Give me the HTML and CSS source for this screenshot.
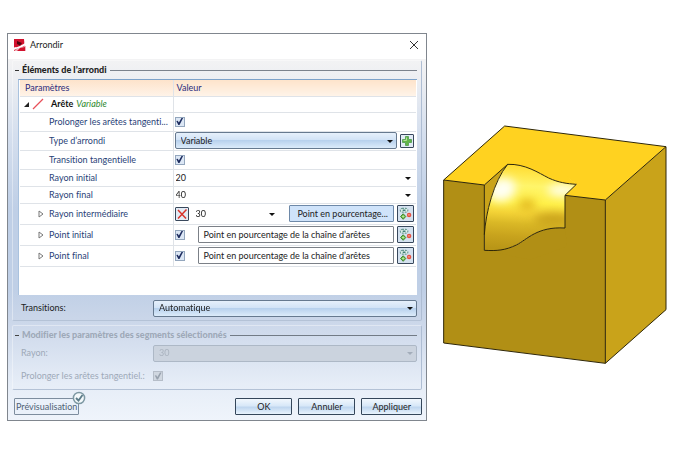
FILE: index.html
```html
<!DOCTYPE html>
<html lang="fr">
<head>
<meta charset="utf-8">
<title>Arrondir</title>
<link rel="stylesheet" href="styles.css">
</head>
<body>
<svg class="defs" width="0" height="0" aria-hidden="true">
  <symbol id="pick" viewBox="0 0 16 16">
    <rect x="2.5" y="2.5" width="8" height="4" rx="2" fill="#dff0ea" stroke="#6a9a94" stroke-width="1.2" stroke-dasharray="2 1"/>
    <path d="M5 4.5h3" stroke="#2d6f66" stroke-width="1.4"/>
    <path d="M5.5 8.3 8.3 11.2 5.5 14.2 2.7 11.2z" fill="#5fae3c" stroke="#3c8428" stroke-width="1"/>
    <path d="M5.5 9.8v2.8M4.1 11.2h2.8" stroke="#b8e69a" stroke-width="1"/>
    <circle cx="11.8" cy="9.5" r="2.4" fill="#e8503e"/>
    <path d="M10.5 9.5h2.4" stroke="#f9b5a8" stroke-width="1"/>
  </symbol>
</svg>
<main class="page">
  <form class="dialog">
    <header class="titlebar">
      <svg class="logo" viewBox="0 0 12 12" aria-hidden="true">
        <path d="M0 0H10L11 12H0z" fill="#d2122e"/>
        <path d="M0 12 4 9 12 7V12z" fill="#f2b4bc"/>
        <path d="M0 8.5C3 8 5 8 12 3.5L11 6.500C7 9 4 9 0 11z" fill="#fff"/>
        <path d="M3 2 8 4 6 6.500 3 5z" fill="#4b0710"/>
        <path d="M6 9 11 8V12H3z" fill="#d2122e"/>
      </svg>
      <h1 class="title">Arrondir</h1>
      <button class="close" type="button" aria-label="Fermer">
        <svg viewBox="0 0 10 10" aria-hidden="true"><path d="M1 1 9 9M9 1 1 9" stroke="#333" stroke-width="1" fill="none"/></svg>
      </button>
    </header>

    <div class="body">
      <section class="group">
        <h2 class="legend"><span class="dash"></span>Éléments de l’arrondi<span class="rule"></span></h2>
        <div class="grid-box">
          <table class="params">
            <colgroup><col class="col-name"><col></colgroup>
            <thead>
              <tr><th>Paramètres</th><th>Valeur</th></tr>
            </thead>
            <tbody>
              <tr class="r-head">
                <td><div class="node">
                  <svg class="open" viewBox="0 0 6 6" aria-hidden="true"><path d="M6 0V6H0z" fill="#222"/></svg>
                  <svg class="edge" viewBox="0 0 12 12" aria-hidden="true"><path d="M1 11 11 1" stroke="#e8505a" stroke-width="1.200"/></svg>
                  <b>Arête</b> <i>Variable</i>
                </div></td>
                <td></td>
              </tr>
              <tr class="r-mid">
                <td><label class="name" for="ext">Prolonger les arêtes tangenti...</label></td>
                <td><div class="cell"><input class="check" id="ext" type="checkbox" checked></div></td>
              </tr>
              <tr class="r-mid">
                <td><label class="name" for="type">Type d’arrondi</label></td>
                <td><div class="cell">
                  <span class="combo"><select id="type"><option>Variable</option></select></span>
                  <button class="icon-btn" type="button" aria-label="Ajouter">
                    <svg viewBox="0 0 12 12" aria-hidden="true"><path d="M4.500 1.500h3v3h3v3h-3v3h-3v-3h-3v-3h3z" fill="#62b548" stroke="#5fa65c" stroke-width="1"/><path d="M5.500 2.500v3h-3" stroke="#b5e29a" fill="none"/></svg>
                  </button>
                </div></td>
              </tr>
              <tr class="r-mid">
                <td><label class="name" for="trans">Transition tangentielle</label></td>
                <td><div class="cell"><input class="check" id="trans" type="checkbox" checked></div></td>
              </tr>
              <tr class="r-short">
                <td><label class="name" for="r1">Rayon initial</label></td>
                <td><div class="cell"><span class="combo plain"><select id="r1"><option>20</option></select></span></div></td>
              </tr>
              <tr class="r-short">
                <td><label class="name" for="r2">Rayon final</label></td>
                <td><div class="cell"><span class="combo plain"><select id="r2"><option>40</option></select></span></div></td>
              </tr>
              <tr class="r-tall">
                <td><label class="name sub" for="r3"><svg viewBox="0 0 6 8" aria-hidden="true"><path d="M1 1 5 4 1 7z" fill="#fff" stroke="#777"/></svg>Rayon intermédiaire</label></td>
                <td><div class="cell">
                  <button class="icon-btn" type="button" aria-label="Supprimer">
                    <svg viewBox="0 0 12 12" aria-hidden="true"><path d="M2 2 10 10.500M10.500 1.500 2 10.500" stroke="#d8342c" stroke-width="1.500"/></svg>
                  </button>
                  <span class="combo plain mid"><select id="r3"><option>30</option></select></span>
                  <button class="field-btn active" type="button">Point en pourcentage...</button>
                  <button class="icon-btn pick" type="button" aria-label="Choisir"><svg viewBox="0 0 16 16"><use href="#pick"/></svg></button>
                </div></td>
              </tr>
              <tr class="r-tall">
                <td><label class="name sub" for="p1"><svg viewBox="0 0 6 8" aria-hidden="true"><path d="M1 1 5 4 1 7z" fill="#fff" stroke="#777"/></svg>Point initial</label></td>
                <td><div class="cell">
                  <input class="check" id="p1" type="checkbox" checked>
                  <button class="field-btn wide" type="button">Point en pourcentage de la chaîne d’arêtes</button>
                  <button class="icon-btn pick" type="button" aria-label="Choisir"><svg viewBox="0 0 16 16"><use href="#pick"/></svg></button>
                </div></td>
              </tr>
              <tr class="r-tall">
                <td><label class="name sub" for="p2"><svg viewBox="0 0 6 8" aria-hidden="true"><path d="M1 1 5 4 1 7z" fill="#fff" stroke="#777"/></svg>Point final</label></td>
                <td><div class="cell">
                  <input class="check" id="p2" type="checkbox" checked>
                  <button class="field-btn wide" type="button">Point en pourcentage de la chaîne d’arêtes</button>
                  <button class="icon-btn pick" type="button" aria-label="Choisir"><svg viewBox="0 0 16 16"><use href="#pick"/></svg></button>
                </div></td>
              </tr>
            </tbody>
          </table>
        </div>
        <div class="form-row transitions">
          <label for="tr">Transitions:</label>
          <span class="combo"><select id="tr"><option>Automatique</option></select></span>
        </div>
      </section>

      <section class="group disabled">
        <h2 class="legend"><span class="dash"></span>Modifier les paramètres des segments sélectionnés<span class="rule"></span></h2>
        <div class="form-row">
          <label for="ray">Rayon:</label>
          <span class="combo"><select id="ray" disabled><option>30</option></select></span>
        </div>
        <div class="form-row tail">
          <label for="ext2">Prolonger les arêtes tangentiel.:</label>
          <input class="check" id="ext2" type="checkbox" checked disabled>
        </div>
      </section>

      <footer class="actions">
        <button class="btn preview" type="button">Prévisualisation
          <svg class="badge" viewBox="0 0 14 14" aria-hidden="true"><circle cx="7" cy="7" r="5.600" fill="#f4f9fb" stroke="#7d98a3" stroke-width="1.500"/><path d="M4 7 6.500 9.500 10.500 4" fill="none" stroke="#5c7c89" stroke-width="1.800"/></svg>
        </button>
        <button class="btn" type="button">OK</button>
        <button class="btn" type="button">Annuler</button>
        <button class="btn" type="button">Appliquer</button>
      </footer>
    </div>
  </form>

  <svg class="model" viewBox="38 46 672 717" role="img" aria-label="Cube avec arrondi variable">
    <defs>
      <clipPath id="surf"><path d="M232 164C285 162 325 190 355 205C385 219 410 222 438 224L404 257V355C320 350 290 390 258 406C225 422 200 424 162 422V375C166 310 190 215 232 164z"/></clipPath>
      <linearGradient id="shade" gradientUnits="userSpaceOnUse" x1="300" y1="165" x2="285" y2="420">
        <stop offset="0" stop-color="#ffda2e"/>
        <stop offset=".25" stop-color="#fff56a"/>
        <stop offset=".45" stop-color="#fff048"/>
        <stop offset=".58" stop-color="#f3d236"/>
        <stop offset=".7" stop-color="#dab826"/>
        <stop offset=".85" stop-color="#c8a31d"/>
        <stop offset="1" stop-color="#b99617"/>
      </linearGradient>
      <filter id="soft" x="-60%" y="-60%" width="220%" height="220%" color-interpolation-filters="sRGB"><feGaussianBlur stdDeviation="15"/></filter>
    </defs>
    <path d="M223 49 707 111 525 271 404 257 438 224 355 160 232 164 162 226 40 211z" fill="#ffd220"/>
    <path d="M525 271 707 111V600L525 761z" fill="#c9a31a"/>
    <path d="M40 211 162 226V422L404 400V257L525 271V761L40 700z" fill="#b18f15"/>
    <path d="M232 164C285 162 325 190 355 205C385 219 410 222 438 224L355 150z" fill="#ffd220"/>
    <path d="M404 355C320 350 290 390 258 406C225 422 200 424 162 422L300 450 410 410z" fill="#b18f15"/>
    <path d="M162 226 232 164C190 215 166 310 162 375z" fill="#c9a31a"/>
    <g clip-path="url(#surf)">
      <rect x="155" y="155" width="290" height="275" fill="url(#shade)"/>
      <g filter="url(#soft)">
        <ellipse cx="215" cy="240" rx="42" ry="34" fill="#fffff4" transform="rotate(-20 215 240)"/>
        <ellipse cx="395" cy="242" rx="44" ry="17" fill="#fffff0"/>
        <ellipse cx="290" cy="285" rx="26" ry="16" fill="#e0b41e"/>
        <ellipse cx="370" cy="330" rx="60" ry="20" fill="#c9a31c"/>
      </g>
    </g>
    <g fill="none" stroke="#2e2608" stroke-width="3" stroke-linejoin="round">
      <path d="M162 226 40 211 223 49 707 111 525 271 404 257"/>
      <path d="M40 211V700L525 761 707 600V111M525 271V761"/>
      <path d="M232 164 162 226V422C200 424 225 422 258 406C290 390 320 350 404 355V257L438 224C410 222 385 219 355 205C325 190 285 162 232 164z"/>
      <path d="M232 164C190 215 166 310 162 375"/>
    </g>
  </svg>
</main>
</body>
</html>
```
FILE: styles.css
```css
* { box-sizing: border-box; }

body {
  margin: 0;
  background: #fff;
  color: #222;
  font: 9px/12px Lato, "Open Sans", sans-serif;
  font-variant-ligatures: none;
}

button, select, input { font: inherit; font-variant-ligatures: none; color: inherit; margin: 0; }
svg { display: block; }
.defs { position: absolute; }

.page {
  display: grid;
  grid-template-columns: 420fr 224fr;
  gap: 16px;
  align-items: start;
  padding: 33px 13px 32px 7px;
}

.model { width: 100%; margin-top: 92px; }

.dialog { border: 1px solid #80868e; background: #fff; }

.titlebar {
  display: flex;
  align-items: center;
  gap: 4px;
  height: 25px;
  padding: 0 7px 3px 6px;
}
.logo { width: 12px; height: 12px; }
.title { flex: 1; margin: 0; font-size: 9px; font-weight: 400; }
.close { width: 10px; height: 10px; padding: 0; border: 0; background: none; }

.body {
  padding: 1px 4px 5px;
  background: linear-gradient(#f3f3f4 0, #eceef2 20px, #d5dfee 75px, #bfcfe6 150px, #bfcfe6 230px, #cad6e9 260px, #e6edf7 325px, #eff4fb 100%);
}

.group {
  border: 1px solid #ffffff60;
  border-right-color: #aebdd3;
  border-bottom-color: #b4c2d6;
  border-radius: 2px;
  padding: 3px 4px 3px 5px;
}
.group + .group { margin-top: 4px; padding-bottom: 4px; }

.legend {
  display: flex;
  align-items: center;
  gap: 3px;
  margin: 0 0 3px -3px;
  font-size: 9px;
  line-height: 12px;
  font-weight: 900;
  white-space: nowrap;
}
.dash { width: 4px; height: 1px; background: #333; }
.rule { flex: 1; height: 1px; background: #7b828c; }

.grid-box {
  min-height: 216px;
  padding: 0 1px;
  border-top: 1px solid #7da2c9;
  border-left: 1px solid #a9c2de;
  background: #fff;
}

.params { width: 100%; table-layout: fixed; border-collapse: collapse; }
.col-name { width: 153px; }
.params th {
  height: 16px;
  padding: 0 0 0 5px;
  text-align: left;
  font-weight: 400;
  color: #2c2c7c;
  background: linear-gradient(#fde3cb, #fff3e8);
}
.params th + th, .params td + td { border-left: 1px solid #dfe3e8; }
.params th + th { padding-left: 3px; }
.params tr { border-bottom: 1px solid #dfe3e8; }
.params td { padding: 0; white-space: nowrap; color: #2a3f78; }
.r-head { height: 16px; }
.r-short { height: 17px; }
.r-mid { height: 19px; }
.r-tall { height: 21px; }

.name { display: block; padding-left: 29px; }
.name.sub { display: flex; align-items: center; gap: 5px; padding-left: 18px; }
.name svg { width: 6px; height: 8px; }

.node { display: flex; align-items: center; gap: 3px; padding-left: 4px; }
.node b { margin-left: 4px; color: #111; }
.node i { color: #2f8a2f; }
.open { width: 5px; height: 5px; }
.edge { width: 12px; height: 12px; }

.cell { display: flex; align-items: center; gap: 3px; padding: 0 2px 0 1px; color: #222; }

.check {
  appearance: none;
  flex: none;
  width: 10px;
  height: 10px;
  border: 1px solid #93a6bd;
  background: #dce7f5;
}
.check::before {
  content: "";
  display: block;
  height: 8px;
  background: #1d2c5e;
  clip-path: polygon(10% 45%, 28% 40%, 42% 62%, 75% 5%, 95% 5%, 50% 95%, 35% 95%);
}

.combo { position: relative; flex: 1; min-width: 0; display: block; }
.combo select {
  appearance: none;
  display: block;
  width: 100%;
  height: 17px;
  padding: 0 14px 0 5px;
  border: 1px solid #66798f;
  border-radius: 2px;
  background: linear-gradient(#e6f0fb, #d2e3f6 45%, #b8d1ed 50%, #dcebfa);
}
.combo::after {
  content: "";
  position: absolute;
  right: 4px;
  top: 50%;
  margin-top: -1px;
  border: 3px solid transparent;
  border-top-color: #111;
  border-bottom: 0;
}
.combo.plain select { height: 14px; padding-left: 1px; border: 0; background: none; }
.combo.plain::after { right: 3px; }
.combo.mid { margin: 0 8px 0 3px; }

.icon-btn {
  flex: none;
  width: 14px;
  height: 14px;
  padding: 0;
  border: 1px solid #39485c;
  border-radius: 1px;
  background: #e2ebf5;
}
.icon-btn.pick { width: 17px; height: 17px; background: #d4e1ef; }
.icon-btn svg { width: 100%; height: 100%; }

.field-btn {
  flex: none;
  height: 17px;
  padding: 0 5px;
  border: 1px solid #7b8087;
  border-radius: 1px;
  background: #fff;
  text-align: left;
  white-space: nowrap;
}
.field-btn.active { width: 105px; background: #cfe3fa; border-color: #6e89a8; text-align: right; }
.field-btn.wide { flex: 1; min-width: 0; margin-left: 10px; }

.form-row { display: grid; grid-template-columns: 132px 1fr; align-items: center; min-height: 18px; padding-left: 3px; }
.form-row label { white-space: nowrap; }
.form-row.transitions { margin-top: 4px; }
.form-row.tail { margin-top: 5px; }

.disabled { color: #9ea9b8; }
.disabled .dash { background: #444; }
.disabled .rule { background: #727b86; }
.disabled .combo select { border-color: #adb8c6; background: #cbd3de; color: #aab3bf; opacity: 1; }
.disabled .combo::after { border-top-color: #a3adba; }
.disabled .check { border-color: #b5bdc8; background: #d0d7e0; }
.disabled .check::before { background: #98a2ae; }

.actions { display: flex; gap: 6px; margin-top: 8px; padding-left: 2px; }
.btn {
  min-width: 57px;
  height: 17px;
  padding: 0 10px;
  border: 1px solid #34465a;
  border-radius: 1px;
  background: linear-gradient(#f1f7fd, #d8e8f8 45%, #bfd6ef 55%, #e8f3fd);
}
.btn.preview {
  position: relative;
  margin-right: auto;
  padding: 0 1px;
  border-color: #7d8d9e;
  background: #eaf1fa;
  color: #4f6275;
}
.badge { position: absolute; right: -8px; top: -8px; width: 14px; height: 14px; }
```
